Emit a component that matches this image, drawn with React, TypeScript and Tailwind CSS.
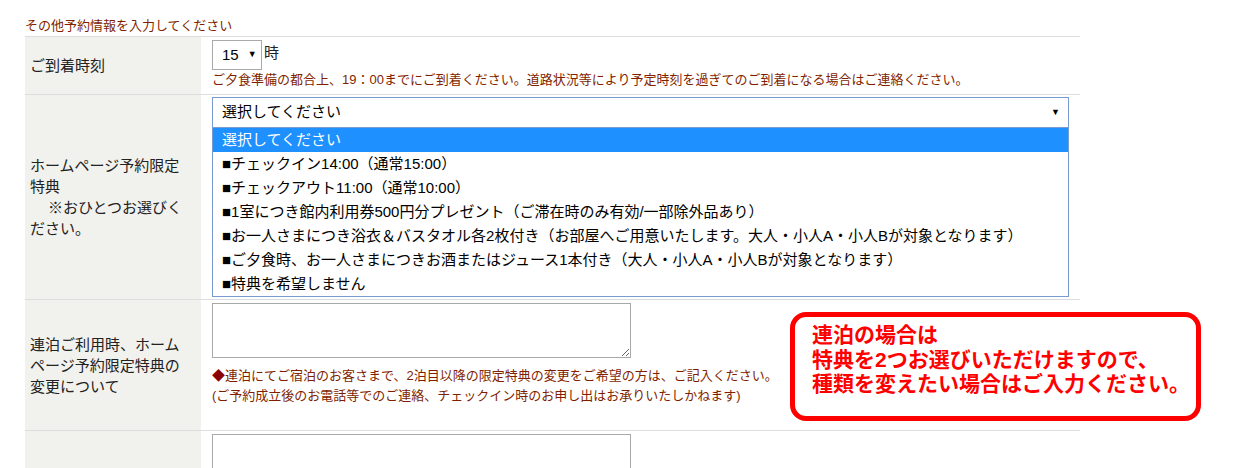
export default function App() {
  const options = [
    "■チェックイン14:00（通常15:00）",
    "■チェックアウト11:00（通常10:00）",
    "■1室につき館内利用券500円分プレゼント（ご滞在時のみ有効/一部除外品あり）",
    "■お一人さまにつき浴衣＆バスタオル各2枚付き（お部屋へご用意いたします。大人・小人A・小人Bが対象となります）",
    "■ご夕食時、お一人さまにつきお酒またはジュース1本付き（大人・小人A・小人Bが対象となります）",
    "■特典を希望しません",
  ];
  return (
    <div className="relative bg-white w-[1239px] h-[468px] overflow-hidden font-['Liberation_Sans','Noto_Sans_CJK_JP',sans-serif] text-[#222]">
      <div className="ml-[25px] w-[1055px] flex flex-col">
        <div className="shrink-0 h-[36px] flex items-end pb-[2px] text-[13px] leading-[16px] text-[#7f1f00]">
          その他予約情報を入力してください
        </div>

        {/* Row 1 */}
        <div className="shrink-0 flex border-t border-[#dddddd] h-[58px]">
          <div className="w-[176px] bg-[#f1f1ed] flex items-center pl-[5px] text-[15px] leading-[21px]">
            ご到着時刻
          </div>
          <div className="flex-1 pl-[11px] pt-[3px]">
            <div className="flex items-center">
              <div className="w-[50px] h-[30px] border border-[#a9a9a9] flex items-center pl-[9px] text-[15px] text-black">
                <span>15</span>
                <span className="ml-[9px] text-[9px]">▼</span>
              </div>
              <span className="ml-[2px] text-[15px] leading-[20px] -mt-[4px]">時</span>
            </div>
            <div className="mt-[3px] text-[13px] leading-[14px] text-[#7f1f00] whitespace-nowrap">
              ご夕食準備の都合上、19：00までにご到着ください。道路状況等により予定時刻を過ぎてのご到着になる場合はご連絡ください。
            </div>
          </div>
        </div>

        {/* Row 2 */}
        <div className="shrink-0 flex border-t border-[#dddddd] h-[205px]">
          <div className="w-[176px] bg-[#f1f1ed] flex items-center pl-[5px] text-[15px] leading-[21px]">
            <div>
              ホームページ予約限定
              <br />
              特典
              <br />
              <span className="pl-[18px]">※おひとつお選びく</span>
              <br />
              ださい。
            </div>
          </div>
          <div className="flex-1 pl-[11px] pt-[2px]">
            <div className="w-[857px] h-[31px] border border-[#7a9bd0] flex items-center justify-between pl-[9px] pr-[8px] text-[15px] text-black">
              <span>選択してください</span>
              <span className="text-[9px]">▼</span>
            </div>
            <div className="w-[857px] border-x border-b border-[#7a9bd0] text-[15px] text-black">
              <div className="h-[24px] leading-[24px] pl-[9px] bg-[#1e90ff] text-white">選択してください</div>
              {options.map((o) => (
                <div key={o} className="h-[24px] leading-[24px] pl-[9px] whitespace-nowrap">
                  {o}
                </div>
              ))}
            </div>
          </div>
        </div>

        {/* Row 3 */}
        <div className="shrink-0 flex border-t border-[#dddddd] h-[131px]">
          <div className="w-[176px] bg-[#f1f1ed] flex items-center pl-[5px] text-[15px] leading-[21px]">
            <div>
              連泊ご利用時、ホーム
              <br />
              ページ予約限定特典の
              <br />
              変更について
            </div>
          </div>
          <div className="flex-1 pl-[11px] pt-[3px]">
            <textarea
              readOnly
              className="block w-[419px] h-[55px] border border-[#a9a9a9] bg-white outline-none"
            />
            <div className="mt-[8px] text-[13px] leading-[20px] text-[#7f1f00] whitespace-nowrap">
              <div>
                <span className="text-[#8b0000]">◆</span>
                連泊にてご宿泊のお客さまで、2泊目以降の限定特典の変更をご希望の方は、ご記入ください。
              </div>
              <div>(ご予約成立後のお電話等でのご連絡、チェックイン時のお申し出はお承りいたしかねます)</div>
            </div>
          </div>
        </div>

        {/* Row 4 */}
        <div className="shrink-0 flex border-t border-[#dddddd] h-[70px]">
          <div className="w-[176px] bg-[#f1f1ed]" />
          <div className="flex-1 pl-[11px] pt-[3px]">
            <textarea
              readOnly
              className="block w-[419px] h-[55px] border border-[#a9a9a9] bg-white outline-none"
            />
          </div>
        </div>
      </div>

      <div className="absolute left-[790px] top-[312px] w-[411px] h-[109px] border-[5px] border-[#ff0000] rounded-[16px] bg-white pl-[17px] pt-[6px] text-[21px] font-bold leading-[24.5px] text-[#ff0000] whitespace-nowrap">
        <div>連泊の場合は</div>
        <div>特典を2つお選びいただけますので、</div>
        <div>種類を変えたい場合はご入力ください。</div>
      </div>
    </div>
  );
}
